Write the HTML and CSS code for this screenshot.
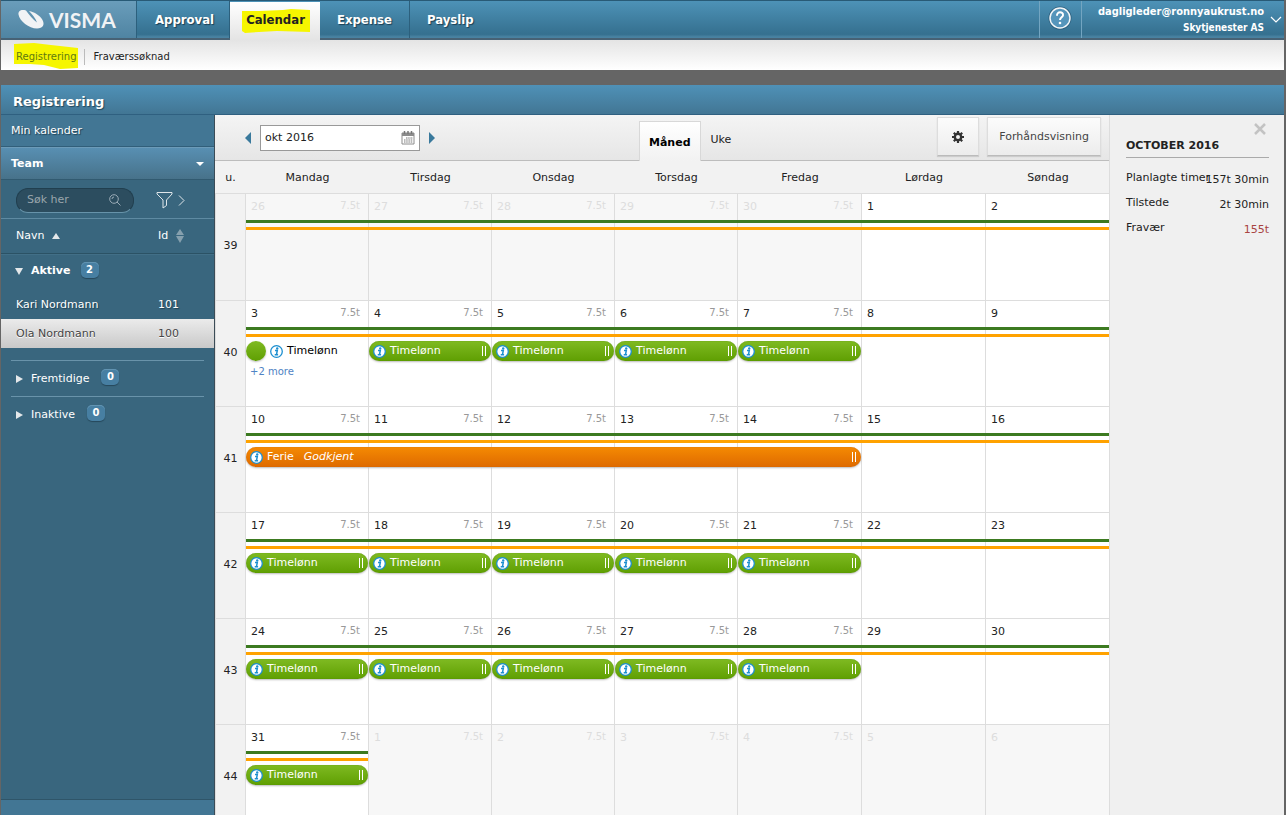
FILE: index.html
```html
<!DOCTYPE html>
<html lang="no">
<head>
<meta charset="utf-8">
<title>Visma – Registrering</title>
<link rel="stylesheet" href="styles.css">
</head>
<body>
<svg class="sprite" aria-hidden="true">
  <symbol id="info" viewBox="0 0 13 13">
    <circle cx="6.500" cy="6.500" r="5.800" fill="#fff" stroke="#1c8fd0" stroke-width="1.300"/>
    <circle cx="7.200" cy="3.500" r="1.200" fill="#1c8fd0"/>
    <path d="M5 5.600h2.300L6.500 9.300h1M4.700 9.800h3.400" fill="none" stroke="#1c8fd0" stroke-width="1.500"/>
  </symbol>
</svg>
<div class="app">
  <header class="topbar">
    <a class="brand" href="#">
      <svg class="brand-mark" viewBox="0 0 28 22" aria-hidden="true">
        <path d="M9 1.500C4 0 1 2 1.500 5.500 2.500 12 12 19.500 20 19.500c6 0 8-4 5.500-8.500C23 6.500 17.500 3 12 2c3 3 6.500 7 8 11.500C16 10.500 12 6 9 1.500z" fill="#f1f3f5"/>
      </svg>
      <span class="brand-name">VISMA</span>
    </a>
    <nav class="modules">
      <a href="#">Approval</a>
      <a href="#" class="active">
        <svg class="marker" viewBox="0 0 68 24" preserveAspectRatio="none" aria-hidden="true"><path d="M0 2h17l24-1 8-1 19 1v22l-33-1-18 1-14 1-3-2z" fill="#f6f600"/></svg>
        <span>Calendar</span></a>
      <a href="#">Expense</a>
      <a href="#">Payslip</a>
    </nav>
    <button class="help" aria-label="Help">
      <svg viewBox="0 0 24 24" aria-hidden="true"><circle cx="12" cy="12" r="11.500" fill="#2b5f7e"/><circle cx="12" cy="12" r="10" fill="#5595bb" stroke="#f2f6f8" stroke-width="1.500"/><path d="M9 9.700C8.700 5 15.500 5.500 15 9.300c-.3 2-3 2.200-3 4.700" fill="none" stroke="#fff" stroke-width="2"/><circle cx="12" cy="17" r="1.300" fill="#fff"/></svg>
    </button>
    <button class="account">
      <span class="who"><span class="mail">dagligleder@ronnyaukrust.no</span><span class="company">Skytjenester AS</span></span>
      <svg class="chev" viewBox="0 0 12 7" aria-hidden="true"><path d="M1 1l5 5 5-5" fill="none" stroke="#fff" stroke-width="1.200"/></svg>
    </button>
  </header>
  <nav class="subnav">
    <a href="#" class="current">
      <svg class="marker" viewBox="0 0 64 26" preserveAspectRatio="none" aria-hidden="true"><path d="M0 1l20-1 17 2 27 3v20l-18 1-16-4-14-1H0z" fill="#f6f600"/></svg>
      <span>Registrering</span></a>
    <a href="#">Fraværssøknad</a>
  </nav>
  <h1 class="title">Registrering</h1>
  <div class="body">
    <aside class="sidebar">
      <a class="side-link" href="#">Min kalender</a>
      <button class="side-team"><span>Team</span><i class="tri down small"></i></button>
      <div class="people">
        <div class="search-row">
          <label class="search"><input type="text" placeholder="Søk her" aria-label="Søk her">
            <svg viewBox="0 0 12 12" aria-hidden="true"><circle cx="5" cy="5" r="4.300"/><path d="M8 8l3.500 3.500M3 5a2 2 0 0 1 2-2"/></svg></label>
          <button class="filter" aria-label="Filter">
            <svg viewBox="0 0 30 18" aria-hidden="true"><path d="M1 1.500h15v1.500L10.500 9v5.500L7 17V9L1 3zM23 4.500l5 5-5 5"/></svg></button>
        </div>
        <div class="cols"><button>Navn<i class="tri up"></i></button><button>Id<span class="sort"><i class="tri up"></i><i class="tri down"></i></span></button></div>
        <button class="group open"><i class="tri down"></i><b>Aktive</b><span class="badge">2</span></button>
        <a class="person" href="#"><span>Kari Nordmann</span><span>101</span></a>
        <a class="person selected" href="#"><span>Ola Nordmann</span><span>100</span></a>
        <button class="group ruled first"><i class="tri right"></i>Fremtidige<span class="badge">0</span></button>
        <button class="group ruled"><i class="tri right"></i>Inaktive<span class="badge">0</span></button>
      </div>
      <div class="side-foot"></div>
    </aside>
    <main class="main">
      <div class="toolbar">
        <div class="picker">
          <button aria-label="Forrige"><i class="tri left"></i></button>
          <label class="month"><input type="text" value="okt 2016" aria-label="Måned">
            <svg viewBox="0 0 14 14" aria-hidden="true"><path d="M1 2h12v11H1z" fill="#fff" stroke="#8c8c8c"/><path d="M1 2h12v3H1z" fill="#8c8c8c"/><path d="M3.500 0v3M7 0v3M10.500 0v3" stroke="#777" stroke-width="1.500"/><path d="M5 7h7M3 9h9M3 11h9" stroke="#777" stroke-dasharray="1.500 .7"/></svg></label>
          <button aria-label="Neste"><i class="tri right"></i></button>
        </div>
        <div class="tabs"><button class="on">Måned</button><button>Uke</button></div>
        <div class="actions">
          <button class="tool gear" aria-label="Innstillinger"><svg viewBox="0 0 12 12" aria-hidden="true"><circle cx="6" cy="6" r="3.200" fill="none" stroke="#333" stroke-width="2.400"/><path d="M6 0v2.500M6 9.500V12M0 6h2.500M9.500 6H12M1.800 1.800l1.700 1.700M8.500 8.500l1.700 1.700M10.200 1.800L8.500 3.500M3.500 8.500l-1.700 1.700" stroke="#333" stroke-width="2.200"/></svg></button>
          <button class="tool">Forhåndsvisning</button>
        </div>
      </div>
      <div class="days"><span>u.</span><span>Mandag</span><span>Tirsdag</span><span>Onsdag</span><span>Torsdag</span><span>Fredag</span><span>Lørdag</span><span>Søndag</span></div>
      <div id="weeks"></div>
    </main>
    <aside class="summary">
      <button class="close" aria-label="Lukk"><svg viewBox="0 0 12 12" aria-hidden="true"><path d="M1 1l10 10M11 1L1 11" stroke="#c3c3c3" stroke-width="2.500"/></svg></button>
      <h2>OCTOBER 2016</h2>
      <dl>
        <div><dt>Planlagte timer</dt><dd>157t 30min</dd></div>
        <div><dt>Tilstede</dt><dd>2t 30min</dd></div>
        <div><dt>Fravær</dt><dd class="neg">155t</dd></div>
      </dl>
    </aside>
  </div>
</div>
<script src="script.js"></script>
</body>
</html>
```

FILE: styles.css
```css
*, *::after { box-sizing: border-box; }
body { margin: 0; background: #656565; color: #222; font: 11px/16px "DejaVu Sans", Verdana, sans-serif; }
button, input { font: inherit; color: inherit; border: 0; background: none; padding: 0; margin: 0; }
button { cursor: pointer; text-align: left; }
a { color: inherit; text-decoration: none; }
h1, h2, dl, dd { margin: 0; }
.sprite { position: absolute; width: 0; height: 0; }
.app { height: 100vh; overflow: hidden; display: flex; flex-direction: column; padding: 0 2px 0 1px; }
.marker { position: absolute; z-index: 0; }

.topbar { flex: none; height: 40px; display: flex; border-top: 1px solid #285a76; border-bottom: 2px solid #476275; background: linear-gradient(#4d92b7, #35708f 90%, #4982a1 97%); color: #fff; font-family: "DejaVu Sans Condensed", "DejaVu Sans", sans-serif; font-weight: bold; text-shadow: 1px 1px 1px #1b3f54; }
.brand { width: 136px; display: flex; align-items: center; padding-left: 16px; gap: 4px; background: linear-gradient(#6a9dbb, #4f84a2); border-right: 1px solid #2c607d; }
.brand-mark { width: 28px; height: 22px; }
.brand-name { font: bold 21px/30px Lato, sans-serif; color: #f1f3f5; text-shadow: none; }
.modules { flex: 1; display: flex; font-size: 13px; }
.modules a { position: relative; display: flex; align-items: center; padding: 1px 17px 0 17px; border-right: 1px solid #2c607d; }
.modules a:first-child { padding-right: 15px; padding-left: 18px; }
.modules a:last-child { border-right: 0; }
.modules .active { margin: 1px 0 -2px; padding: 0 15px 2px 16px; color: #222; text-shadow: none; background: linear-gradient(#fff, #e4e4e4); border: 0; }
.modules .active span, .subnav span { position: relative; }
.modules .marker { left: 12px; top: 7px; width: 68px; height: 24px; }
.help { width: 43px; display: flex; justify-content: center; padding-top: 5px; border: solid #73a5c1; border-width: 0 1px; }
.help svg { width: 24px; height: 24px; }
.account { display: flex; align-items: center; gap: 6px; padding: 0 2px 0 16px; text-align: right; }
.who { display: flex; flex-direction: column; text-align: right; }
.mail { font-size: 11px; line-height: 16px; }
.company { font-size: 10px; }
.chev { width: 12px; height: 7px; }

.subnav { flex: none; height: 30px; display: flex; align-items: center; background: linear-gradient(#e4e4e4, #fff); font-size: 10px; padding: 3px 0 0 15px; }
.subnav a { position: relative; padding-right: 7px; }
.subnav a + a { padding-left: 9px; border-left: 1px solid #bbb; }
.subnav .current { color: #5f7a10; }
.subnav .marker { left: -2px; top: -6px; width: 64px; height: 26px; }

.title { flex: none; margin-top: 15px; height: 30px; padding-left: 12px; font-size: 13px; line-height: 33px; color: #fff; background: linear-gradient(#4f91b7, #427694); border-bottom: 1px solid #2f6080; text-shadow: 1px 1px 1px #24485c; }
.body { flex: 1; min-height: 0; display: flex; }

.sidebar { flex: none; width: 214px; display: flex; flex-direction: column; color: #fff; text-shadow: 1px 1px 1px #1f4255; border-right: 1px solid #3b4c57; background: #39667e; }
.side-link { height: 32px; line-height: 32px; padding-left: 10px; background: #427694; border-bottom: 1px solid #315f7a; }
.side-team { height: 33px; display: flex; align-items: center; justify-content: space-between; padding: 0 10px; font-weight: bold; background: linear-gradient(#588fb2, #47728a); border: solid; border-width: 1px 0; border-color: #6c9bb8 #315a70 #315a70; }
.tri { display: block; width: 0; height: 0; border: 0 solid transparent; }
.tri.down { border-width: 7px 4px 0; border-top-color: #e4e8ea; }
.tri.down.small { border-width: 4px 4px 0; border-top-color: #fff; }
.tri.up { border-width: 0 4px 6px; border-bottom-color: #e4e8ea; }
.tri.right { border-width: 4px 0 4px 7px; border-left-color: #e4e8ea; }
.tri.left { border-width: 6px 6px 6px 0; border-right-color: #39799c; }
.people { flex: 1; display: flex; flex-direction: column; }
.search-row { height: 39px; display: flex; align-items: center; gap: 22px; padding: 2px 0 0 15px; border-bottom: 1px solid #5e8aa2; }
.search { width: 118px; height: 25px; border-radius: 12px; display: flex; align-items: center; padding: 0 12px 0 10px; background: #2c4d5f; border: 1px solid #213f4f; border-bottom-color: #6793aa; }
.search input { min-width: 0; flex: 1; outline: 0; }
.search input::placeholder { color: #9aa5ac; opacity: 1; }
.search svg { width: 12px; height: 12px; fill: none; stroke: #9aabb6; }
.filter svg { display: block; width: 30px; height: 18px; fill: none; stroke: #dfe6ea; }
.cols { height: 35px; display: flex; align-items: center; padding-left: 15px; border-bottom: 1px solid #2b5265; box-shadow: 0 1px #426f87; }
.cols button { display: flex; align-items: center; gap: 8px; flex: none; }
.cols button:first-child { width: 142px; }
.cols .sort { display: grid; gap: 1px; opacity: .45; }
.group { display: flex; align-items: center; height: 36px; gap: 8px; padding-left: 14px; }
.group.open { height: 34px; margin-bottom: 2px; }
.badge { min-width: 18px; height: 16px; margin-left: 2px; margin-bottom: 3px; border-radius: 5px; text-align: center; font-weight: bold; font-size: 10px; line-height: 16px; background: #477fa2; box-shadow: 0 1px 1px #26485b, inset 0 1px #6294b2; }
.person { display: flex; height: 29px; align-items: center; padding-left: 15px; }
.person span:first-child { width: 142px; }
.person.selected { color: #444; text-shadow: 0 1px #fff; background: linear-gradient(#ebebeb, #c9c9c9); }
.ruled { margin: 0 10px; padding-left: 5px; border-top: 1px solid #6993aa; }
.ruled .badge { margin-left: 4px; }
.ruled.first { margin-top: 12px; }
.side-foot { flex: none; height: 16px; background: #427694; border-top: 1px solid #2f5569; }

.main { flex: 1; min-width: 0; background: #f2f2f2; border-right: 1px solid #ddd; }
.toolbar { height: 46px; display: flex; justify-content: space-between; padding: 0 8px 0 30px; background: linear-gradient(#f4f4f4, #e6e6e6); border-bottom: 1px solid #bdbdbd; }
.picker { display: flex; align-items: center; gap: 9px; padding-top: 1px; }
.picker .tri.right { border-width: 6px 0 6px 6px; border-left-color: #39799c; }
.month { width: 160px; height: 26px; display: flex; align-items: center; padding: 0 4px; background: #fff; border: 1px solid #999; }
.month input { min-width: 0; flex: 1; outline: 0; }
.month svg { width: 14px; height: 14px; }
.tabs { display: flex; align-items: flex-end; }
.tabs button { height: 40px; padding: 0 2px 0 10px; }
.tabs .on { padding: 2px 9px 0; font-weight: bold; color: #000; background: linear-gradient(#fff, #f2f2f2); border: 1px solid #d8d8d8; border-bottom: 0; margin-bottom: -1px; }
.actions { display: flex; gap: 8px; padding: 2px 0 4px; }
.tool { color: #444; padding: 0 11px; background: linear-gradient(#fcfcfc, #ececec); border: 1px solid #ddd; border-bottom-color: #bbb; box-shadow: 0 1px 1px #ccc; }
.gear { padding: 0 14px; }
.gear svg { display: block; width: 12px; height: 12px; }

.days, .week { display: grid; grid-template-columns: 31px repeat(4, minmax(0, 123fr)) repeat(3, minmax(0, 124fr)); margin-right: -1px; }
.days { height: 32px; padding-top: 1px; align-items: center; text-align: center; }
.week { grid-template-rows: 26px 10px 4px 20px 45px; border-top: 1px solid #ddd; }
.week:first-child { grid-template-rows: 26px 10px 4px 20px 46px; }
.wk { grid-area: 1 / 1 / -1 / 2; display: flex; align-items: center; justify-content: center; padding-bottom: 2px; border: solid #ddd; border-width: 0 1px; }
.day { grid-row: 1 / -1; display: flex; justify-content: space-between; padding: 5px 8px 0 5px; background: #fff; border-right: 1px solid #ddd; }
.day small { font-size: 10px; line-height: 14px; color: #999; }
.day.out { background: #f7f7f7; color: #ddd; }
.day.out small { color: #ddd; }
.quota { grid-row: 2; border-top: 3px solid #3c7a20; border-bottom: 3px solid #ffa200; margin-right: 1px; z-index: 1; }
.event { grid-row: 4; z-index: 1; display: flex; align-items: center; gap: 4px; margin-right: 1px; padding: 0 5px 0 4px; border-radius: 10px; color: #fff; background: linear-gradient(#7fba22, #5f9f02); box-shadow: 0 1px 2px #bbb, inset 0 0 1px #4d8400; }
.event.leave { background: linear-gradient(#f58a02, #de6a00); box-shadow: 0 1px 2px #bbb, inset 0 0 1px #c45c00; }
.event em { margin-left: 6px; }
.event svg, .loose svg { width: 13px; height: 13px; flex: none; }
.event::after { content: ""; margin-left: auto; width: 4px; height: 10px; border: solid #fff; border-width: 0 1px; }
.loose { grid-row: 4; z-index: 1; display: flex; align-items: center; gap: 4px; color: #000; }
.loose i { width: 20px; height: 20px; border-radius: 50%; background: linear-gradient(#7fba22, #5f9f02); box-shadow: 0 1px 2px #bbb; }
.more { grid-row: 5; z-index: 1; padding: 3px 0 0 4px; font-size: 10px; color: #4f83c4; justify-self: start; }

.summary { flex: none; width: 174px; padding: 8px 15px 8px 16px; background: #f0f0f0; display: flex; flex-direction: column; }
.close { align-self: flex-end; height: 12px; margin-right: 3px; }
.close svg { display: block; width: 12px; height: 12px; }
.summary h2 { font-size: 11px; line-height: 20px; padding-top: 1px; padding-bottom: 1px; border-bottom: 1px solid #aaa; margin-bottom: 12px; }
.summary dl div { display: flex; justify-content: space-between; height: 25px; white-space: nowrap; }
.summary dt { min-width: 0; }
.summary dd { flex: none; padding-top: 2px; }
.summary .neg { color: #a94442; }
```

FILE: script.js
```js
const icon = '<svg aria-hidden="true"><use href="#info"/></svg>';
const event = (col) => `<div class="event" style="grid-column:${col}">${icon}<span>Timelønn</span></div>`;
const fiveDays = [2, 3, 4, 5, 6].map(event).join('');
const weeks = [
  { no: 39, days: [26, 27, 28, 29, 30, 1, 2], out: [0, 5], extra: '' },
  { no: 40, days: [3, 4, 5, 6, 7, 8, 9], extra: `<div class="loose" style="grid-column:2"><i></i>${icon}<span>Timelønn</span></div><a class="more" href="#" style="grid-column:2">+2 more</a>` + [3, 4, 5, 6].map(event).join('') },
  { no: 41, days: [10, 11, 12, 13, 14, 15, 16], extra: `<div class="event leave" style="grid-column:2/7">${icon}<span>Ferie</span><em>Godkjent</em></div>` },
  { no: 42, days: [17, 18, 19, 20, 21, 22, 23], extra: fiveDays },
  { no: 43, days: [24, 25, 26, 27, 28, 29, 30], extra: fiveDays },
  { no: 44, days: [31, 1, 2, 3, 4, 5, 6], out: [1, 7], quotaEnd: 3, extra: event(2) }
];
document.getElementById('weeks').innerHTML = weeks.map((w) => {
  const [from, to] = w.out || [0, 0];
  const cells = w.days.map((d, i) =>
    `<div class="day${i >= from && i < to ? ' out' : ''}" style="grid-column:${i + 2}"><span>${d}</span>${i < 5 ? '<small>7.5t</small>' : ''}</div>`).join('');
  return `<section class="week"><div class="wk">${w.no}</div>${cells}<div class="quota" style="grid-column:2/${w.quotaEnd || 9}"></div>${w.extra}</section>`;
}).join('');
```
